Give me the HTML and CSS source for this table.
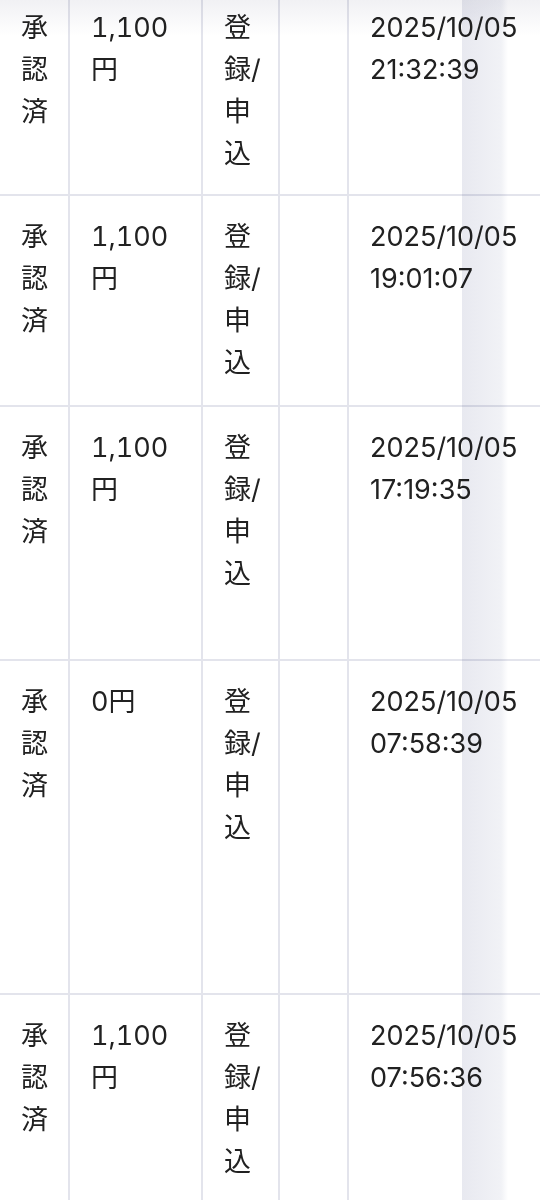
FILE: index.html
```html
<!DOCTYPE html>
<html lang="ja">
<head>
    <meta charset="UTF-8">
    <meta name="viewport" content="width=device-width, initial-scale=1.0">
    <title>成果一覧</title>
    <link rel="stylesheet" href="styles.css">
</head>
<body>
    <div class="table-wrap">
        <div class="table">
            <div class="row row-1">
                <div class="cell">承認済</div>
                <div class="cell amount">1,100円</div>
                <div class="cell">登録/申込</div>
                <div class="cell"></div>
                <div class="cell">2025/10/05 21:32:39</div>
            </div>
            <div class="row row-2">
                <div class="cell">承認済</div>
                <div class="cell amount">1,100円</div>
                <div class="cell">登録/申込</div>
                <div class="cell"></div>
                <div class="cell">2025/10/05 19:01:07</div>
            </div>
            <div class="row row-3">
                <div class="cell">承認済</div>
                <div class="cell amount">1,100円</div>
                <div class="cell">登録/申込</div>
                <div class="cell"></div>
                <div class="cell">2025/10/05 17:19:35</div>
            </div>
            <div class="row row-4">
                <div class="cell">承認済</div>
                <div class="cell amount">0円</div>
                <div class="cell">登録/申込</div>
                <div class="cell"></div>
                <div class="cell">2025/10/05 07:58:39</div>
            </div>
            <div class="row row-5">
                <div class="cell">承認済</div>
                <div class="cell amount">1,100円</div>
                <div class="cell">登録/申込</div>
                <div class="cell"></div>
                <div class="cell">2025/10/05 07:56:36</div>
            </div>
        </div>
        <!-- scroll shadows -->
        <div class="shade-col"></div>
        <div class="shade-top"></div>
    </div>
</body>
</html>
```

FILE: styles.css
```css
body {
    margin: 0;
    padding: 0;
    background: #fff;
    color: #212121;
    font-family: Inter, "Noto Sans CJK JP", sans-serif;
    font-size: 27px;
    line-height: 42px;
    overflow: hidden;
}

.table-wrap {
    position: relative;
    height: 1200px;
    overflow: hidden;
}

.table {
    margin-top: -13px;
}

.row {
    display: grid;
    grid-template-columns: 70px 133px 77px 69px 1fr;
}

.row-1 { height: 209px; }
.row-2 { height: 211px; }
.row-3 { height: 254px; }
.row-4 { height: 334px; }
.row-5 { height: 300px; }

.cell {
    box-sizing: border-box;
    padding: 20px 12px 0 21px;
    border-right: 2px solid #e3e4ec;
    border-bottom: 2px solid #e3e4ec;
    line-break: strict;
}

.cell:first-child {
    padding-right: 20px;
}

.cell.amount {
    padding-right: 26px;
    font-variant-numeric: tabular-nums;
}

.cell:last-child {
    border-right: none;
}

.shade-col {
    position: absolute;
    top: 0;
    bottom: 0;
    left: 462px;
    width: 46px;
    background: linear-gradient(to right, #e8e9f0 0%, #f1f2f6 85%, #fff 100%);
    mix-blend-mode: multiply;
    pointer-events: none;
}

.shade-top {
    position: absolute;
    top: 0;
    left: 0;
    right: 0;
    height: 36px;
    background: linear-gradient(to bottom, #f1f1f4, #fff);
    mix-blend-mode: multiply;
    pointer-events: none;
}
```
